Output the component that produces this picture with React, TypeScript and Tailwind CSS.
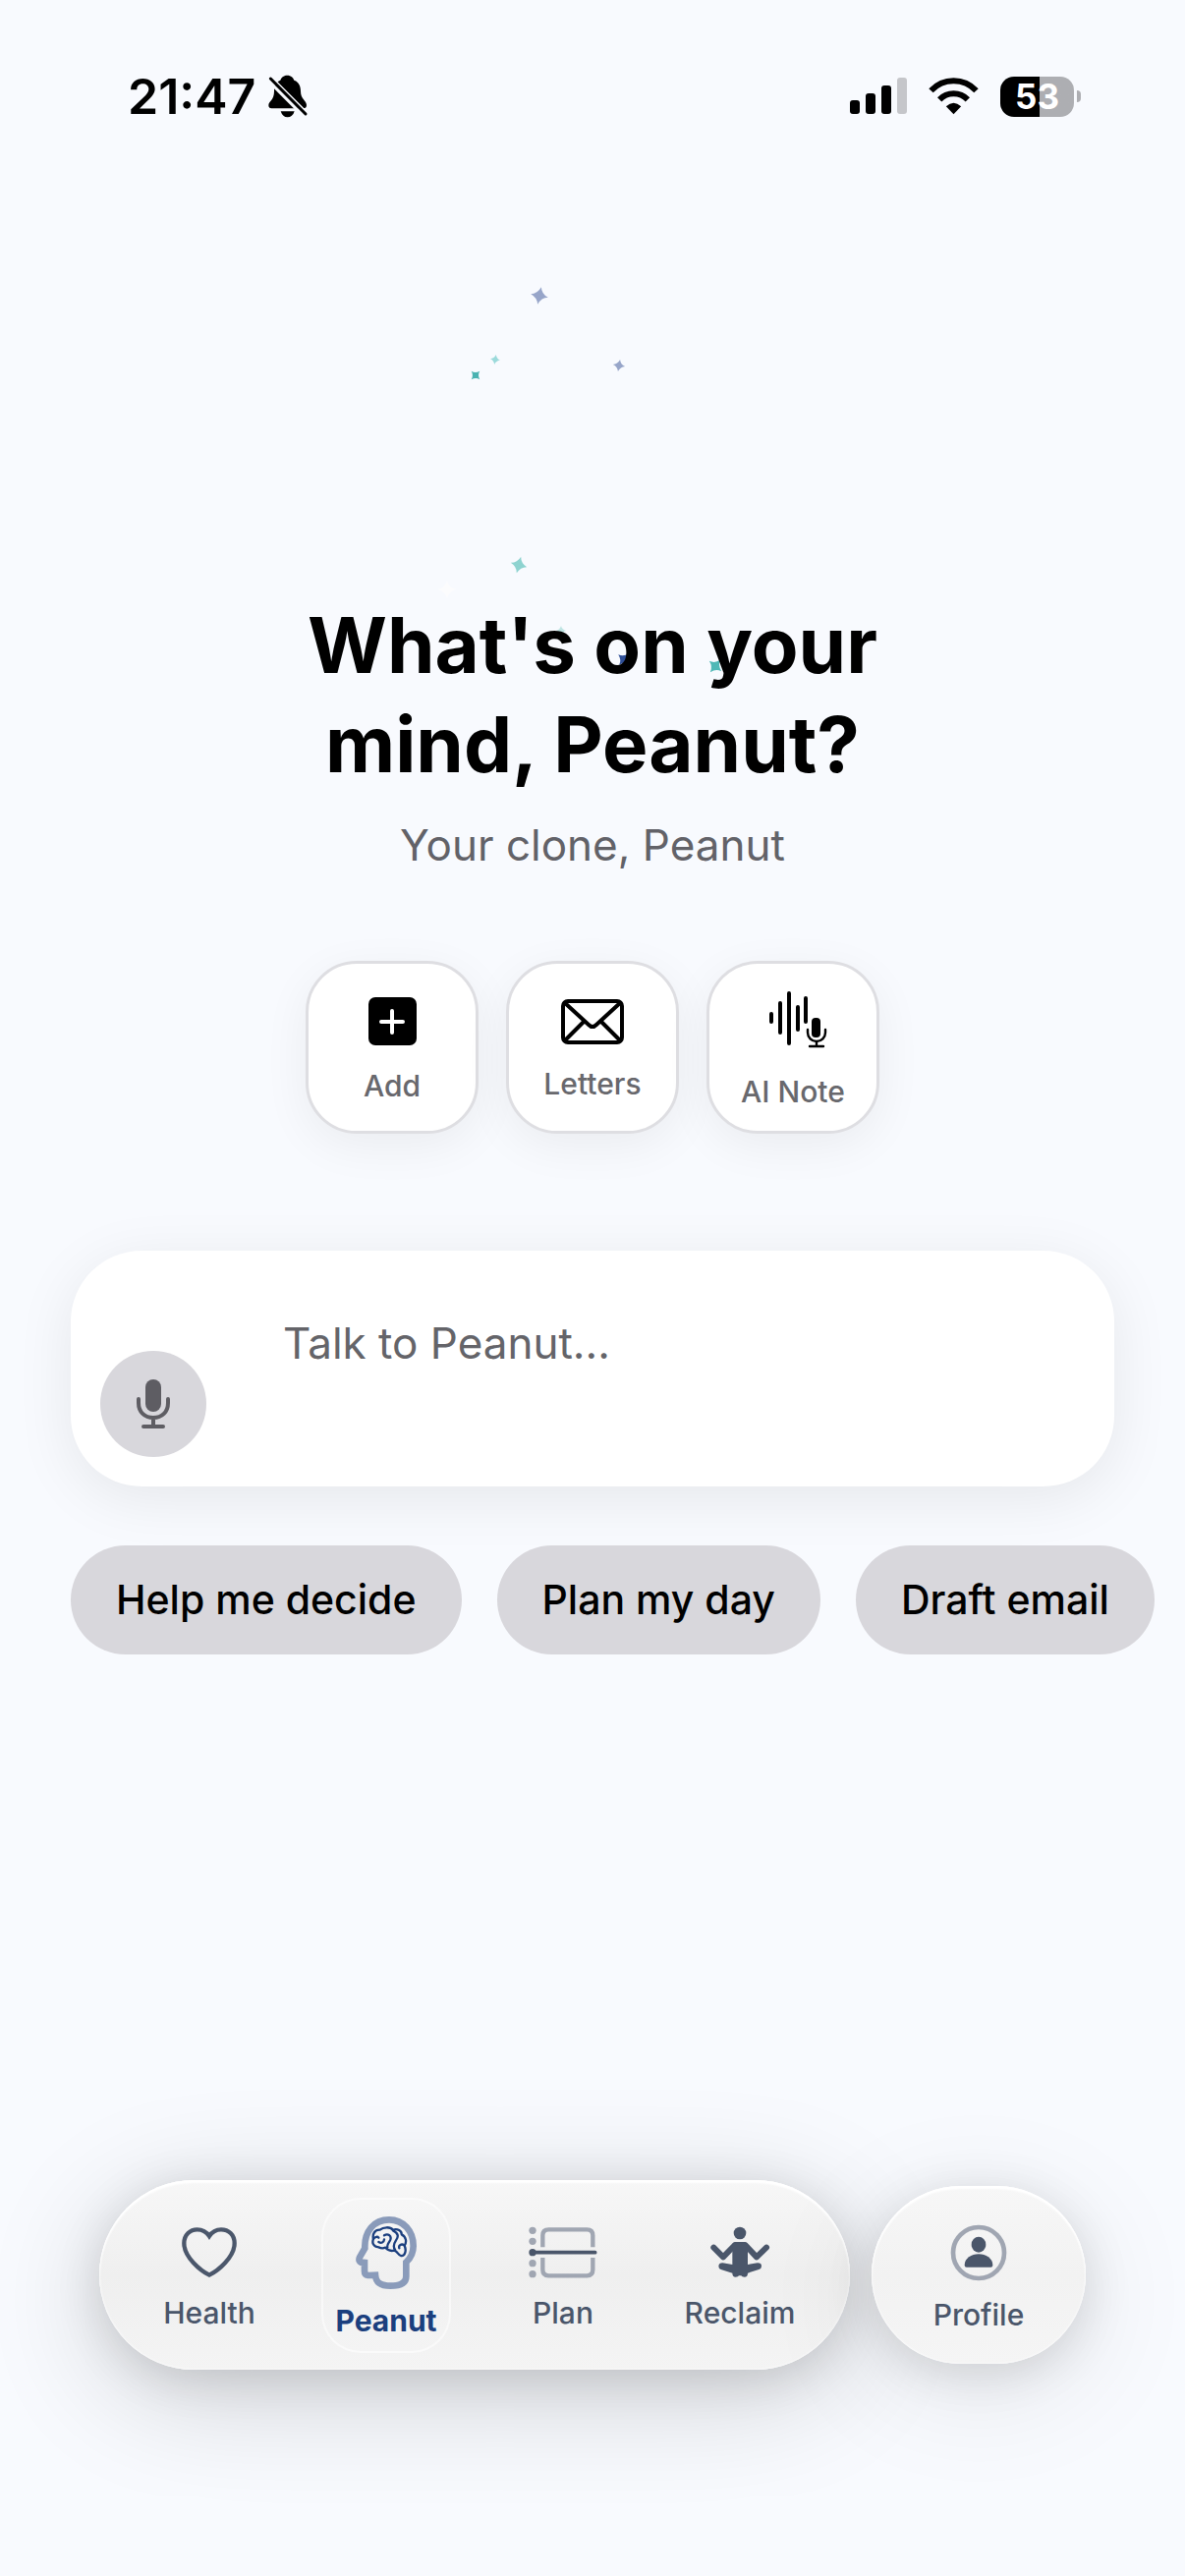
import { ReactNode, useState } from 'react';
import clsx from 'clsx';

const STAR = 'M0 -10 Q1.8 -2.6 10 0 Q2.6 1.8 0 10 Q-1.8 2.6 -10 0 Q-2.6 -1.8 0 -10Z';

const sparkles = [
    { x: 126, y: 11, scale: 0.9, rotate: 12, color: '#97a5c9' },
    { x: 81, y: 76, scale: 0.5, rotate: 10, color: '#9bdadb' },
    { x: 61, y: 92, scale: 0.6, rotate: 45, color: '#49b2b1' },
    { x: 207, y: 82, scale: 0.62, rotate: 10, color: '#97a5c9' },
    { x: 105, y: 285, scale: 0.85, rotate: 15, color: '#8ed3d0' },
    { x: 32, y: 310, scale: 0.9, rotate: 0, color: '#fcfcfd' },
    { x: 148, y: 352, scale: 0.5, rotate: 0, color: '#bfe4e3' },
    { x: 212, y: 381, scale: 0.75, rotate: 40, color: '#2f4f97' },
    { x: 305, y: 388, scale: 0.8, rotate: 40, color: '#4fb8b6' },
];

function Sparkles() {
    return (
        <svg className="absolute top-0 left-1/2 -translate-x-1/2" width="360" height="420" viewBox="0 0 360 420" aria-hidden="true">
            {sparkles.map((s, i) => (
                <path key={i} d={STAR} fill={s.color} transform={`translate(${s.x} ${s.y}) rotate(${s.rotate}) scale(${s.scale})`} />
            ))}
        </svg>
    );
}

function StatusBar() {
    return (
        <header className="flex items-center justify-between pl-[130px] pr-[106px] pt-[68px]">
            <div className="flex items-center gap-3">
                <span className="text-[50px] leading-[60px] font-semibold">21:47</span>
                <svg width="42" height="44" viewBox="514 79 126 132" aria-label="Silent mode">
                    <path d="M575 81C587 81 593 88 596 96C612 102 616 116 616 130C616 154 634 158 634 172Q634 182 624 182H527Q518 182 518 173C518 160 535 158 535 130C535 112 541 102 554 96C557 88 563 81 575 81Z" />
                    <path d="M555 191H597C593 203 586 209 576 209C566 209 559 203 555 191Z" />
                    <path d="M516 96L632 212" stroke="#f8fafe" strokeWidth="10" />
                    <path d="M524 86L640 202" stroke="#f8fafe" strokeWidth="10" />
                    <path d="M524 91L631 199" stroke="#000" strokeWidth="9" strokeLinecap="round" />
                </svg>
            </div>
            <div className="flex items-center gap-[22px]">
                <svg width="58" height="38" viewBox="0 0 58 38" aria-label="Signal">
                    <rect x="0" y="23" width="10" height="14" rx="3" />
                    <rect x="16" y="16" width="10" height="21" rx="3" />
                    <rect x="32" y="8" width="10" height="29" rx="3" />
                    <rect x="48" y="0" width="10" height="37" rx="3" fill="#c5c6ca" />
                </svg>
                <svg width="51" height="38" viewBox="316 86 152 114" aria-label="Wi-Fi" fill="none" stroke="#000" strokeWidth="18">
                    <path d="M323 126A94 94 0 0 1 461 126" />
                    <path d="M349 153A60 60 0 0 1 435 153" />
                    <path d="M392 198L369 174Q392 153 415 174Z" fill="#000" stroke="none" />
                </svg>
                <div className="flex items-center gap-[3px]">
                    <div className="flex h-[41px] w-[75px] items-center justify-center rounded-[14px] bg-linear-to-r from-black from-[53%] to-[#adaeb2] to-[53%] text-[35px] font-bold leading-none text-white">
                        53
                    </div>
                    <div className="h-3 w-1 rounded-r-full bg-[#adaeb2]" />
                </div>
            </div>
        </header>
    );
}

function AddIcon() {
    return (
        <svg width="62" height="62" viewBox="0 0 62 62" aria-hidden="true">
            <rect x="7" y="6" width="49" height="49" rx="7" />
            <path d="M31 20V42M20 31H42" stroke="#fff" strokeWidth="4" strokeLinecap="round" />
        </svg>
    );
}

function LettersIcon() {
    return (
        <svg width="68" height="58" viewBox="569 1010 68 58" fill="none" stroke="#000" strokeWidth="4" aria-hidden="true">
            <rect x="573" y="1018" width="60" height="42" rx="5" />
            <path d="M574 1019L599 1042Q603 1046 607 1042L632 1019M574 1059L594 1039M632 1059L612 1039" />
        </svg>
    );
}

function AiNoteIcon() {
    return (
        <svg width="74" height="74" viewBox="770 1003 74 74" fill="none" stroke="#000" strokeLinecap="round" aria-hidden="true">
            <path d="M785 1032V1040M794 1021V1051M803 1011V1062M812 1025V1048M820 1016V1040" strokeWidth="4" />
            <rect x="826" y="1036" width="9" height="20" rx="4" fill="#000" stroke="none" />
            <path d="M822 1048V1051C822 1056 826 1060 831 1060C836 1060 840 1056 840 1051V1048M831 1060V1065M824 1065H838" strokeWidth="2.4" />
        </svg>
    );
}

function MicIcon() {
    return (
        <svg width="36" height="52" viewBox="0 0 36 52" fill="none" stroke="#5e5d63" strokeWidth="4" strokeLinecap="round" aria-hidden="true">
            <rect x="10" y="1" width="16" height="33" rx="8" fill="#5e5d63" stroke="none" />
            <path d="M3 21V25C3 34 9 40 18 40C27 40 33 34 33 25V21M18 40V49M8 49H28" />
        </svg>
    );
}

function HeartIcon() {
    return (
        <svg width="66" height="66" viewBox="299 209 198 198" fill="none" stroke="#4b576b" strokeWidth="13" aria-hidden="true">
            <path d="M398 376C372 363 321 322 321 279C321 252 340 237 361 237C379 237 390 245 398 257C406 245 417 237 434 237C457 237 475 252 475 279C475 322 424 363 398 376Z" />
        </svg>
    );
}

function HeadIcon() {
    return (
        <svg width="68" height="82" viewBox="835 183 204 246" fill="none" aria-hidden="true">
            <path
                d="M872 292C870 240 900 205 946 205C990 205 1020 240 1020 285C1020 308 1010 324 998 335V378C998 401 977 407 950 407C924 407 906 400 904 374L882 375Q871 373 871 362V336L860 335Q852 330 856 320Z"
                stroke="#8a9bba"
                strokeWidth="20"
            />
            <g stroke="#1b3f7e" strokeWidth="7" strokeLinecap="round" strokeLinejoin="round">
                <path d="M914 289C898 288 893 276 898 264C894 248 903 235 918 236C928 227 950 226 957 236C972 231 985 239 984 250C999 257 1000 274 993 284C1000 300 994 317 982 315C972 312 974 303 962 299C949 302 940 297 935 290C928 293 920 292 914 289Z" />
                <path d="M898 263C904 256 911 256 914 260M931 265C930 275 922 278 914 273M931 253C942 246 954 253 950 266C946 276 938 281 941 290M958 238C974 246 976 256 967 268C959 280 958 288 964 297M992 283C984 277 974 283 977 292" />
            </g>
        </svg>
    );
}

function PlanIcon() {
    return (
        <svg width="74" height="66" viewBox="170 209 222 198" fill="none" aria-hidden="true">
            <g fill="#a0a6b2">
                <circle cx="188" cy="240" r="11" />
                <circle cx="188" cy="273" r="11" />
                <circle cx="188" cy="340" r="11" />
                <circle cx="188" cy="373" r="11" />
            </g>
            <path d="M219 291V255Q219 237 237 237H354Q372 237 372 255V291M219 323V360Q219 378 237 378H354Q372 378 372 360V323" stroke="#a0a6b2" strokeWidth="13" />
            <circle cx="188" cy="307" r="11" fill="#4a566a" />
            <path d="M188 307H379" stroke="#4a566a" strokeWidth="11" strokeLinecap="round" />
        </svg>
    );
}

function ReclaimIcon() {
    return (
        <svg width="66" height="66" viewBox="719 209 198 198" fill="#4a566a" aria-hidden="true">
            <circle cx="818" cy="248" r="19" />
            <path d="M738 292L767 321L803 284H834L869 321L899 292" fill="none" stroke="#4a566a" strokeWidth="18" strokeLinecap="round" strokeLinejoin="round" />
            <path d="M795 280H842V344L872 339Q884 339 884 349Q884 356 876 359L842 370Q842 382 832 382Q824 382 822 378H815Q813 382 805 382Q795 382 795 370L760 359Q753 356 753 349Q754 339 765 339L795 344Z" />
        </svg>
    );
}

function ProfileIcon() {
    return (
        <svg width="70" height="70" viewBox="364 202 210 210" aria-hidden="true">
            <circle cx="469" cy="307" r="78" fill="none" stroke="#a0a6b2" strokeWidth="14" />
            <ellipse cx="469" cy="282" rx="22" ry="24" fill="#4a566a" />
            <path d="M426 345C426 324 447 311 469 311C491 311 512 324 512 345Q512 351 506 351H432Q426 351 426 345Z" fill="#4a566a" />
        </svg>
    );
}

const actions = [
    { label: 'Add', icon: <AddIcon /> },
    { label: 'Letters', icon: <LettersIcon /> },
    { label: 'AI Note', icon: <AiNoteIcon /> },
];

const suggestions = ['Help me decide', 'Plan my day', 'Draft email'];

const tabs: { label: string; icon: ReactNode }[] = [
    { label: 'Health', icon: <HeartIcon /> },
    { label: 'Peanut', icon: <HeadIcon /> },
    { label: 'Plan', icon: <PlanIcon /> },
    { label: 'Reclaim', icon: <ReclaimIcon /> },
];

export default function App() {
    const [message, setMessage] = useState('');
    const [activeTab, setActiveTab] = useState('Peanut');

    return (
        <div className="flex min-h-screen w-full flex-col overflow-x-hidden bg-[#f8fafe] font-['Inter',sans-serif] text-black">
            <StatusBar />

            <main>
                {/* Greeting */}
                <section className="relative mt-[162px] pt-[316px] text-center">
                    <Sparkles />
                    <h1 className="relative text-[78px] leading-[101px] font-bold">
                        What's on your
                        <br />
                        mind, Peanut?
                    </h1>
                    <p className="relative mt-6 text-[44px] leading-[56px] text-[#626268]">Your clone, Peanut</p>
                </section>

                {/* Quick actions */}
                <section className="mt-[90px] flex justify-center gap-7">
                    {actions.map((action) => (
                        <button
                            key={action.label}
                            type="button"
                            className="flex size-44 flex-col items-center justify-center gap-4 rounded-[52px] border-3 border-[#dedee2] bg-white text-[30px] leading-9 font-medium text-[#68686d] shadow-[0_12px_48px_rgba(0,0,0,0.06)]"
                        >
                            {action.icon}
                            {action.label}
                        </button>
                    ))}
                </section>

                {/* Composer */}
                <form
                    onSubmit={(e) => e.preventDefault()}
                    className="mx-[72px] mt-[119px] flex h-60 items-end gap-[78px] rounded-[72px] bg-white p-[30px] shadow-[0_12px_60px_rgba(0,0,0,0.08)]"
                >
                    <button type="button" aria-label="Record" className="flex size-[108px] shrink-0 items-center justify-center rounded-full bg-[#d8d7dc]">
                        <MicIcon />
                    </button>
                    <textarea
                        aria-label="Message"
                        value={message}
                        onChange={(e) => setMessage(e.target.value)}
                        placeholder="Talk to Peanut..."
                        className="min-w-0 flex-1 resize-none self-stretch pt-9 text-[44px] leading-[56px] outline-none placeholder:text-[#646469]"
                    />
                </form>

                {/* Suggestions */}
                <div className="mt-[60px] flex gap-9 overflow-x-auto px-[72px] [scrollbar-width:none]">
                    {suggestions.map((text) => (
                        <button
                            key={text}
                            type="button"
                            onClick={() => setMessage(text)}
                            className="h-[111px] shrink-0 rounded-full bg-[#d8d7dc] px-[46px] text-[41px] font-medium whitespace-nowrap"
                        >
                            {text}
                        </button>
                    ))}
                </div>
            </main>

            {/* Bottom navigation */}
            <nav className="mt-auto flex items-center justify-center gap-[22px] pb-[210px] text-[30px] leading-9 font-medium text-[#4a566a]">
                <div className="grid h-[193px] w-[764px] grid-cols-4 items-center justify-items-center rounded-full bg-linear-to-b from-[#f7f7f7] via-[#efefef] to-[#f4f4f4] px-[22px] shadow-[0_24px_120px_rgba(0,0,0,0.18),0_8px_48px_rgba(0,0,0,0.12),inset_0_3px_2px_#fff,inset_0_0_3px_#fff]">
                    {tabs.map((tab) => (
                        <button
                            key={tab.label}
                            type="button"
                            onClick={() => setActiveTab(tab.label)}
                            className={clsx(
                                'flex h-[158px] min-w-[132px] flex-col items-center justify-center gap-[10px] rounded-[40px] border-2',
                                tab.label === activeTab ? 'border-white/50 bg-white/10 font-bold text-[#1b3f7e]' : 'border-transparent'
                            )}
                        >
                            {tab.icon}
                            {tab.label}
                        </button>
                    ))}
                </div>
                <button
                    type="button"
                    className="flex h-[181px] w-[218px] flex-col items-center justify-center gap-[10px] rounded-full bg-linear-to-b from-[#f7f7f7] via-[#f2f2f2] to-[#f5f5f5] shadow-[0_24px_120px_rgba(0,0,0,0.1),0_8px_48px_rgba(0,0,0,0.12),inset_0_3px_2px_#fff,inset_0_0_3px_#fff]"
                >
                    <ProfileIcon />
                    Profile
                </button>
            </nav>
        </div>
    );
}
